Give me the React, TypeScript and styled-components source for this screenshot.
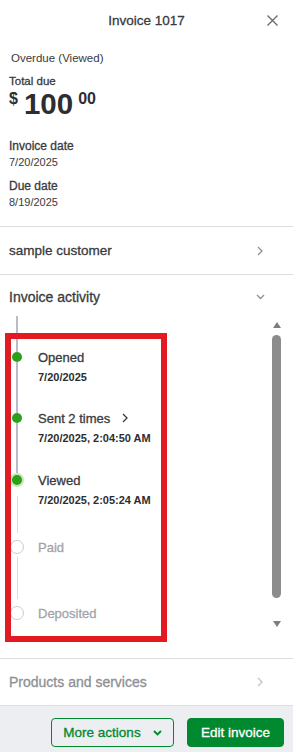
import styled, { createGlobalStyle, css } from 'styled-components';

const GlobalStyle = createGlobalStyle`
  html, body { margin: 0; padding: 0; background: #fff; }
  body {
    font-family: "Liberation Sans", Arial, sans-serif;
    color: #393a3d;
    -webkit-font-smoothing: antialiased;
  }
  * { box-sizing: border-box; }
  ul { margin: 0; padding: 0; list-style: none; }
`;

// text that reads as a "medium" weight in the reference
const medium = css`
  -webkit-text-stroke: 0.3px currentColor;
`;

const Panel = styled.div`
  position: relative;
  width: 293px;
  height: 752px;
  display: flex;
  flex-direction: column;
  background: #fff;
  overflow: hidden;
`;

const Header = styled.header`
  height: 40px;
  display: grid;
  grid-template-columns: 1fr auto 1fr;
  align-items: center;
`;

const Title = styled.h1`
  grid-column: 2;
  margin: 0;
  font-size: 13.5px;
  font-weight: 400;
  ${medium};
`;

const CloseButton = styled.button`
  grid-column: 3;
  justify-self: end;
  margin-right: 15px;
  width: 11px;
  height: 11px;
  padding: 0;
  border: 0;
  background: none;
  display: flex;
`;

const Summary = styled.section`
  padding: 11px 9px 16px;
`;

const Status = styled.div`
  padding-left: 2px;
  font-size: 11.5px;
  line-height: 14px;
  color: #393a3d;
`;

const Label = styled.div<{ $top?: number }>`
  margin-top: ${(p) => p.$top ?? 0}px;
  font-size: ${(p) => (p.$top === 9 ? 11.5 : 12)}px;
  line-height: ${(p) => (p.$top === 9 ? 14 : 16)}px;
  ${medium};
`;

const Value = styled.div`
  font-size: 11px;
  line-height: 16px;
`;

const Amount = styled.div`
  margin-top: 2px;
  height: 28px;
  display: flex;
  align-items: flex-start;
  font-weight: 700;
  color: #2d2e31;
`;

const Currency = styled.span`
  font-size: 16px;
  line-height: 16px;
  margin-top: 1px;
  margin-right: 6px;
`;

const Whole = styled.span`
  font-size: 29.5px;
  line-height: 28px;
  margin-right: 5px;
`;

const Cents = styled.span`
  font-size: 16px;
  line-height: 15px;
  margin-top: 1px;
`;

const Row = styled.div<{ $muted?: boolean; $height: number }>`
  height: ${(p) => p.$height}px;
  border-top: 1px solid #dcdee2;
  padding: 0 30px 0 9px;
  display: flex;
  align-items: center;
  justify-content: space-between;
  font-size: ${(p) => (p.$muted ? 14 : 13.5)}px;
  color: ${(p) => (p.$muted ? '#8d9096' : '#393a3d')};
  ${medium};
`;

const Activity = styled.section`
  flex: 1;
  display: flex;
  flex-direction: column;
  border-top: 1px solid #dcdee2;
  min-height: 0;
`;

const ActivityHead = styled.div`
  height: 41px;
  padding: 14px 28px 0 9px;
  display: flex;
  align-items: flex-start;
  justify-content: space-between;
  font-size: 14px;
  line-height: 16px;
  ${medium};
`;

const ActivityBody = styled.div`
  flex: 1;
  display: flex;
  min-height: 0;
`;

const Timeline = styled.ul`
  flex: 1;
  padding-left: 9px;
`;

type StepState = 'done' | 'current' | 'todo';

const Step = styled.li`
  display: grid;
  grid-template-columns: 16px 1fr;
  column-gap: 13px;
`;

const Marker = styled.div`
  display: flex;
  flex-direction: column;
  align-items: center;
`;

const railColor = { dark: '#b9bcc6', light: '#dcdee2' };

const Rail = styled.span<{ $tone: 'dark' | 'light'; $h?: number; $gapTop?: number; $gapBottom?: number }>`
  display: block;
  width: ${(p) => (p.$tone === 'dark' ? 2 : 1)}px;
  ${(p) => (p.$h !== undefined ? `height: ${p.$h}px;` : 'flex: 1 1 0; min-height: 0;')}
  background: linear-gradient(
    to bottom,
    transparent ${(p) => p.$gapTop ?? 0}px,
    ${(p) => railColor[p.$tone]} ${(p) => p.$gapTop ?? 0}px,
    ${(p) => railColor[p.$tone]} calc(100% - ${(p) => p.$gapBottom ?? 0}px),
    transparent calc(100% - ${(p) => p.$gapBottom ?? 0}px)
  );
`;

const Dot = styled.span<{ $state: StepState }>`
  flex: none;
  border-radius: 50%;
  ${(p) =>
    p.$state === 'done' &&
    css`
      width: 10px;
      height: 10px;
      background: #2ca01c;
    `}
  ${(p) =>
    p.$state === 'current' &&
    css`
      width: 14px;
      height: 14px;
      background: #2ca01c;
      border: 2px solid #c6e8b0;
    `}
  ${(p) =>
    p.$state === 'todo' &&
    css`
      width: 14px;
      height: 14px;
      background: #fff;
      border: 1px solid #c9cbcf;
    `}
`;

const StepBody = styled.div<{ $lead: number }>`
  padding-top: ${(p) => p.$lead}px;
`;

const StepTitle = styled.div<{ $state: StepState }>`
  height: 20px;
  display: flex;
  align-items: center;
  gap: 12px;
  font-size: 13px;
  color: ${(p) => (p.$state === 'todo' ? '#a2a4a9' : '#393a3d')};
  ${medium};
`;

const StepDate = styled.div`
  font-size: 11px;
  line-height: 20px;
  font-weight: 700;
  color: #2d2e31;
`;

const ScrollRail = styled.div`
  width: 9px;
  margin-right: 12px;
  padding-top: 6px;
  display: flex;
  flex-direction: column;
  align-items: center;
`;

const Arrow = styled.span<{ $down?: boolean }>`
  width: 0;
  height: 0;
  border-left: 4px solid transparent;
  border-right: 4px solid transparent;
  ${(p) => (p.$down ? 'border-top: 6px solid #7e7e7e;' : 'border-bottom: 6px solid #7e7e7e;')}
`;

const Track = styled.div`
  width: 9px;
  height: 293px;
  padding: 7px 0 23px;
`;

const Thumb = styled.div`
  height: 100%;
  border-radius: 5px;
  background: #8c8c8c;
`;

const Footer = styled.footer`
  height: 47px;
  background: #eceef1;
  border-top: 1px solid #dcdee2;
  padding: 12px 9px 0;
  display: flex;
  justify-content: flex-end;
  gap: 13px;
`;

const Button = styled.button<{ $primary?: boolean }>`
  height: 29px;
  border-radius: 4px;
  font-family: inherit;
  font-size: 13.5px;
  display: flex;
  align-items: center;
  justify-content: center;
  gap: 12px;
  ${medium};
  ${(p) =>
    p.$primary
      ? css`
          width: 97px;
          background: #00892e;
          color: #fff;
          border: 1px solid #00892e;
        `
      : css`
          width: 123px;
          background: transparent;
          color: #00892e;
          border: 1px solid #00892e;
        `}
`;

const Highlight = styled.div`
  position: absolute;
  left: 5px;
  top: 333px;
  width: 162px;
  height: 309px;
  border: 6px solid #e21b23;
  pointer-events: none;
`;

const ChevronRight = ({ color = '#8d9096' }: { color?: string }) => (
  <svg width="6" height="10" viewBox="0 0 6 10" fill="none">
    <path d="M1 1l4 4-4 4" stroke={color} strokeWidth="1.3" />
  </svg>
);

const ChevronDown = ({ color = '#8d9096', sw = 1.3 }: { color?: string; sw?: number }) => (
  <svg width="9" height="16" viewBox="0 0 9 16" fill="none">
    <path d="M1 6l3.5 3.5L8 6" stroke={color} strokeWidth={sw} />
  </svg>
);

type StepData = {
  title: string;
  date?: string;
  state: StepState;
  next?: StepState;
  lead: number;
  more?: boolean;
};

const steps: StepData[] = [
  { title: 'Opened', date: '7/20/2025', state: 'done', next: 'done', lead: 31 },
  { title: 'Sent 2 times', date: '7/20/2025, 2:04:50 AM', state: 'done', next: 'current', lead: 21, more: true },
  { title: 'Viewed', date: '7/20/2025, 2:05:24 AM', state: 'current', next: 'todo', lead: 22 },
  { title: 'Paid', state: 'todo', next: 'todo', lead: 27 },
  { title: 'Deposited', state: 'todo', lead: 46 },
];

const TimelineStep = ({ step }: { step: StepData }) => {
  const dot = step.state === 'done' ? 10 : 14;
  const leadTone = step.state === 'todo' ? 'light' : 'dark';
  const leadH = step.lead + 10 - dot / 2;
  return (
    <Step>
      <Marker>
        <Rail $tone={leadTone} $h={leadH} $gapBottom={step.state === 'todo' ? 7 : 0} />
        <Dot $state={step.state} />
        {step.next && (
          <Rail $tone={step.next === 'todo' ? 'light' : 'dark'} $gapTop={step.next === 'todo' ? 9 : 0} />
        )}
      </Marker>
      <StepBody $lead={step.lead}>
        <StepTitle $state={step.state}>
          {step.title}
          {step.more && <ChevronRight color="#393a3d" />}
        </StepTitle>
        {step.date && <StepDate>{step.date}</StepDate>}
      </StepBody>
    </Step>
  );
};

export default function App() {
  return (
    <>
      <GlobalStyle />
      <Panel>
        <Header>
          <Title>Invoice 1017</Title>
          <CloseButton aria-label="Close">
            <svg width="11" height="11" viewBox="0 0 11 11">
              <path d="M0.5 0.5l10 10M10.5 0.5l-10 10" stroke="#6b6c72" strokeWidth="1.4" />
            </svg>
          </CloseButton>
        </Header>

        <Summary>
          <Status>Overdue (Viewed)</Status>
          <Label $top={9}>Total due</Label>
          <Amount>
            <Currency>$</Currency>
            <Whole>100</Whole>
            <Cents>00</Cents>
          </Amount>
          <Label $top={20}>Invoice date</Label>
          <Value>7/20/2025</Value>
          <Label $top={8}>Due date</Label>
          <Value>8/19/2025</Value>
        </Summary>

        <Row $height={48}>
          sample customer
          <ChevronRight />
        </Row>

        <Activity>
          <ActivityHead>
            Invoice activity
            <ChevronDown />
          </ActivityHead>
          <ActivityBody>
            <Timeline>
              {steps.map((s) => (
                <TimelineStep key={s.title} step={s} />
              ))}
            </Timeline>
            <ScrollRail>
              <Arrow />
              <Track>
                <Thumb />
              </Track>
              <Arrow $down />
            </ScrollRail>
          </ActivityBody>
        </Activity>

        <Row $height={47} $muted>
          Products and services
          <ChevronRight color="#c2c4c8" />
        </Row>

        <Footer>
          <Button>
            More actions
            <ChevronDown color="#00892e" sw={1.8} />
          </Button>
          <Button $primary>Edit invoice</Button>
        </Footer>

        <Highlight />
      </Panel>
    </>
  );
}
